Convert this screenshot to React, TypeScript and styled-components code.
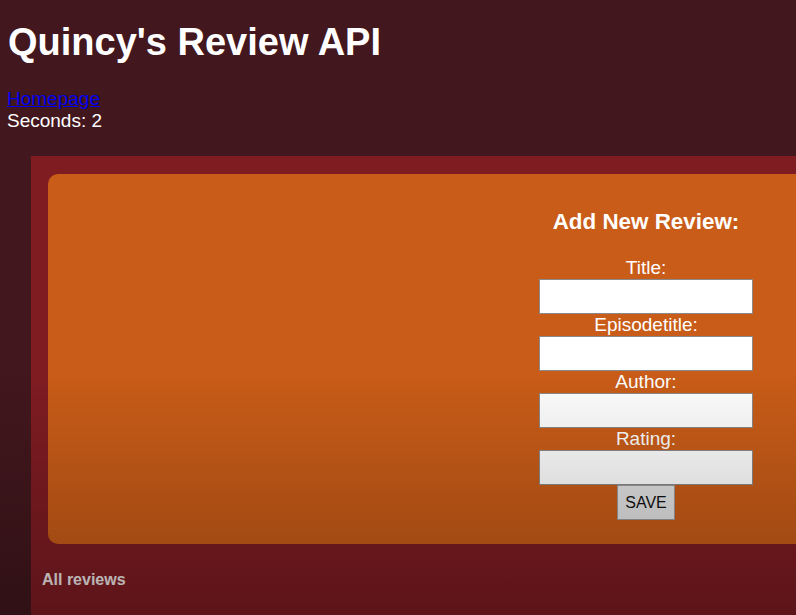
import React from "react";
import styled, { createGlobalStyle } from "styled-components";

const GlobalStyle = createGlobalStyle`
  html, body {
    margin: 0;
    padding: 0;
    background: #42171d;
    overflow: hidden;
  }
  body {
    font-family: "Liberation Sans", Arial, sans-serif;
    color: #ffffff;
  }
`;

const Page = styled.div`
  position: relative;
  min-height: 615px;
  overflow: hidden;
`;

const Shade = styled.div`
  position: absolute;
  inset: 0;
  pointer-events: none;
  background: linear-gradient(
    to bottom,
    rgba(0, 0, 0, 0) 0px,
    rgba(0, 0, 0, 0) 370px,
    rgba(0, 0, 0, 0.27) 615px
  );
`;

const Header = styled.header`
  padding-left: 8px;
`;

const Title = styled.h1`
  margin: 20px 0 0;
  font-size: 38px;
  font-weight: 700;
  line-height: 44px;
  color: #ffffff;
`;

const Nav = styled.nav`
  margin-top: 24px;
  margin-left: -1px;
  font-size: 19px;
  line-height: 22px;
`;

const NavLink = styled.a`
  color: #0000ee;
  text-decoration: underline;
`;

const Line = styled.div`
  margin-left: -1px;
  font-size: 19px;
  line-height: 22px;
`;

const Panel = styled.main`
  margin: 24px 0 0 31px;
  padding: 18px 0 0 17px;
  background: #7f1c22;
  min-height: 460px;
`;

const Card = styled.section`
  display: flex;
  justify-content: flex-end;
  background: #c95c18;
  border-radius: 10px 0 0 10px;
  padding: 35px 43px 24px 0;
`;

const Form = styled.form`
  display: flex;
  flex-direction: column;
  align-items: center;
  width: 214px;
`;

const FormTitle = styled.h3`
  margin: 0 0 23px;
  font-size: 22.4px;
  line-height: 25px;
  font-weight: 700;
  white-space: nowrap;
`;

const Label = styled.label`
  display: block;
  font-size: 19px;
  line-height: 22px;
  text-align: center;
`;

const Input = styled.input`
  box-sizing: border-box;
  display: block;
  width: 214px;
  height: 35px;
  margin: 0;
  border: 1px solid #8a8a8a;
  background: #ffffff;
  font-family: "Liberation Sans", Arial, sans-serif;
  font-size: 16px;
  outline: none;
`;

const Button = styled.button`
  box-sizing: border-box;
  width: 58px;
  height: 35px;
  margin: 0;
  padding: 0;
  border: 1px solid #9a9a9a;
  background: #e3e3e3;
  color: #111111;
  font-family: "Liberation Sans", Arial, sans-serif;
  font-size: 16px;
`;

const Section = styled.h4`
  margin: 27px 0 0 -6px;
  font-size: 16px;
  line-height: 18px;
  font-weight: 700;
  color: #f2eaea;
`;

const fields = ["Title:", "Episodetitle:", "Author:", "Rating:"];

export default function App() {
  return (
    <Page>
      <GlobalStyle />
      <Header>
        <Title>Quincy's Review API</Title>
        <Nav>
          <NavLink href="#">Homepage</NavLink>
        </Nav>
        <Line>Seconds: 2</Line>
      </Header>
      <Panel>
        <Card>
          <Form onSubmit={(e) => e.preventDefault()}>
            <FormTitle>Add New Review:</FormTitle>
            {fields.map((f) => (
              <React.Fragment key={f}>
                <Label>{f}</Label>
                <Input type="text" />
              </React.Fragment>
            ))}
            <Button type="submit">SAVE</Button>
          </Form>
        </Card>
        <Section>All reviews</Section>
      </Panel>
      <Shade />
    </Page>
  );
}
